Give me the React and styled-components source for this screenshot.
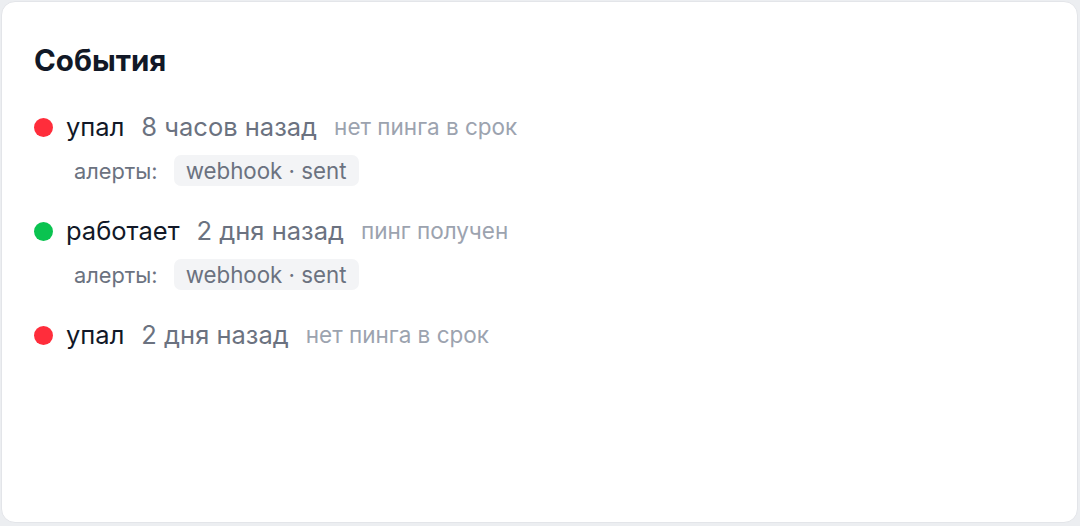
import React from "react";
import styled, { createGlobalStyle } from "styled-components";

const Global = createGlobalStyle`
  html, body {
    margin: 0;
    background: #eceef1;
    font-family: Inter, "Noto Sans", sans-serif;
  }
`;

const Card = styled.section`
  box-sizing: border-box;
  margin: 1px 2px 3px 1px;
  height: 522px;
  background: #fff;
  border: 1px solid #e3e5e9;
  border-radius: 14px;
  padding: 36px 32px;
`;

const Title = styled.h2`
  margin: 0 0 25px;
  font-size: 29.5px;
  font-weight: 700;
  line-height: 44px;
  color: #111827;
`;

const List = styled.div`
  display: flex;
  flex-direction: column;
  gap: 24px;
`;

const Event = styled.div`
  display: flex;
  flex-direction: column;
  gap: 7px;
`;

const Head = styled.div`
  display: flex;
  align-items: center;
  height: 40px;
  white-space: nowrap;
`;

const Dot = styled.span`
  width: 19px;
  height: 19px;
  border-radius: 50%;
  background: ${(p) => (p.$up ? "#0ac350" : "#ff2d3b")};
  margin: 0 13px 0 0;
  flex-shrink: 0;
`;

const Text = styled.span`
  padding-bottom: 2px;
  font-size: ${(p) => p.$size || "25.5px"};
  color: ${(p) => p.$color};
  margin-right: ${(p) => (p.$last ? "0" : "17px")};
`;

const Alerts = styled.div`
  display: flex;
  align-items: center;
  height: 33px;
  padding-left: 40px;
  gap: 16px;
`;

const Label = styled.span`
  font-size: 21.8px;
  color: #6b7280;
`;

const Chip = styled.span`
  background: #f3f4f6;
  border-radius: 7px;
  padding: 0 12px;
  height: 31px;
  line-height: 31px;
  font-size: 22.3px;
  color: #6b7280;
`;

const events = [
  { up: false, status: "упал", time: "8 часов назад", note: "нет пинга в срок", alerts: ["webhook · sent"] },
  { up: true, status: "работает", time: "2 дня назад", note: "пинг получен", alerts: ["webhook · sent"] },
  { up: false, status: "упал", time: "2 дня назад", note: "нет пинга в срок", alerts: [] },
];

export default function App() {
  return (
    <>
      <Global />
      <Card>
        <Title>События</Title>
        <List>
          {events.map((e, i) => (
            <Event key={i}>
              <Head>
                <Dot $up={e.up} />
                <Text $color="#111827">{e.status}</Text>
                <Text $color="#6b7280">{e.time}</Text>
                <Text $color="#9ca3af" $size="22.5px" $last>
                  {e.note}
                </Text>
              </Head>
              {e.alerts.length > 0 && (
                <Alerts>
                  <Label>алерты:</Label>
                  {e.alerts.map((a) => (
                    <Chip key={a}>{a}</Chip>
                  ))}
                </Alerts>
              )}
            </Event>
          ))}
        </List>
      </Card>
    </>
  );
}
